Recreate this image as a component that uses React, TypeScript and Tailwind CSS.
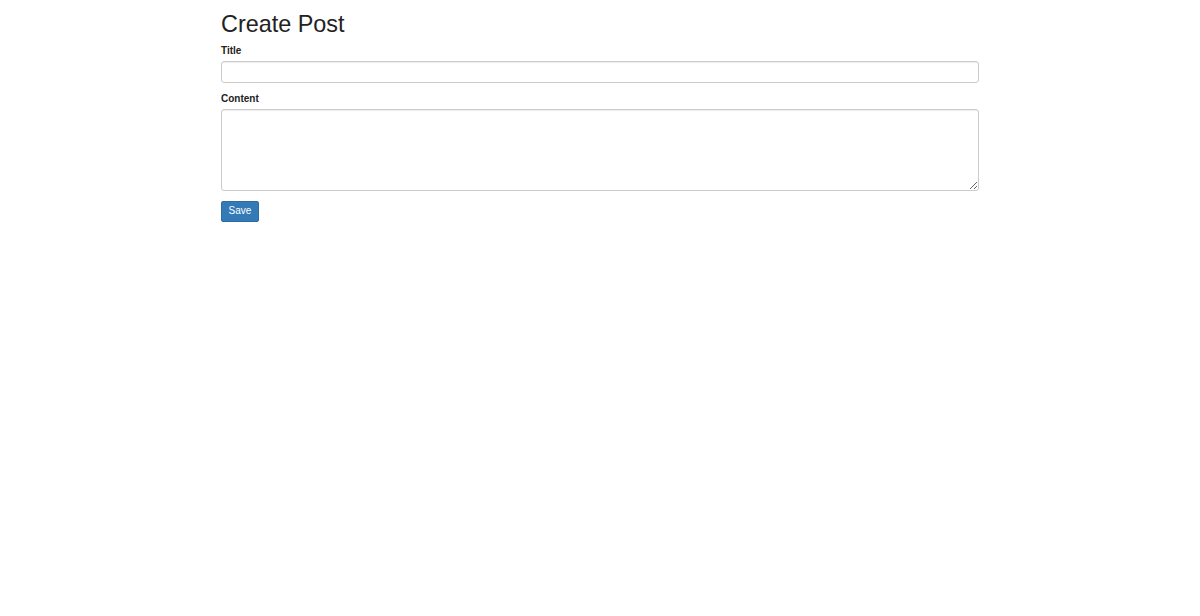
export default function App() {
  return (
    <div className="min-h-screen bg-white font-['Liberation_Sans',Arial,sans-serif] text-[#222]">
      <div className="mx-auto w-[758px]">
        <h1 className="pt-[12px] text-[23.4px] leading-[1.1] font-normal">Create Post</h1>
        <form className="mt-[6px]" onSubmit={(e) => e.preventDefault()}>
          <div className="mb-[9px]">
            <label className="block mb-[3px] text-[10px] leading-[14px] font-bold">Title</label>
            <input
              type="text"
              className="block w-full h-[22px] px-2 text-[10px] rounded-[3px] border border-[#ccc] shadow-[inset_0_1px_1px_rgba(0,0,0,0.075)] outline-none"
            />
          </div>
          <div className="mb-[10px]">
            <label className="block mb-[3px] text-[10px] leading-[14px] font-bold">Content</label>
            <textarea
              className="block w-full h-[82px] px-2 py-1 text-[10px] rounded-[3px] border border-[#ccc] shadow-[inset_0_1px_1px_rgba(0,0,0,0.075)] outline-none"
            />
          </div>
          <button
            type="submit"
            className="block h-[21px] w-[38px] rounded-[2px] border border-[#2e6da4] bg-[#337ab7] text-[10px] leading-none text-white"
          >
            Save
          </button>
        </form>
      </div>
    </div>
  );
}
